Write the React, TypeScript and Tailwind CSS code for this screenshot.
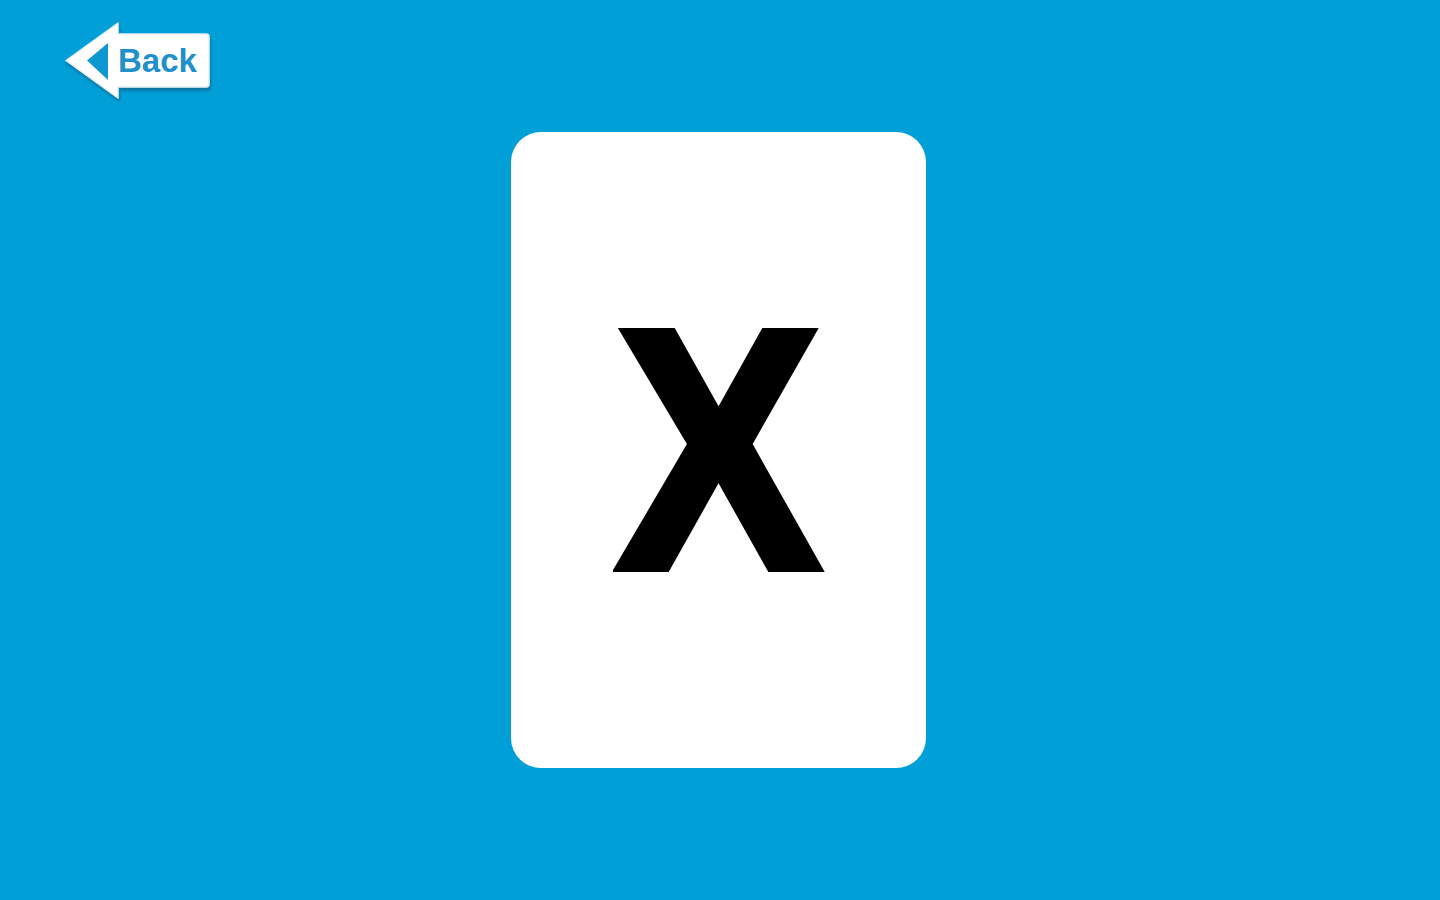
import React from 'react';

const BackButton: React.FC = () => (
    <button className="absolute left-[55px] top-[15px] w-[165px] h-[95px] cursor-pointer">
        <svg width="165" height="95" viewBox="0 0 165 95" className="absolute inset-0">
            <defs>
                <filter id="bshadow" x="-20%" y="-20%" width="140%" height="150%">
                    <feDropShadow dx="1" dy="3" stdDeviation="1.6" floodColor="#0b4f74" floodOpacity="0.55" />
                </filter>
            </defs>
            <path
                d="M11 45.5 L63 8 L63 19 L151 19 Q154 19 154 22 L154 69 Q154 72 151 72 L63 72 L63 83 Z"
                fill="#ffffff"
                stroke="#e3eef4"
                strokeWidth="1.5"
                strokeLinejoin="round"
                filter="url(#bshadow)"
            />
            <path d="M32 45.5 L53 28 L53 65 Z" fill="#0d98d2" />
        </svg>
        <span className="absolute left-[63px] top-[29px] text-[33px] leading-none font-bold text-[#2290c8] font-['Liberation_Sans',Arial,sans-serif]">
            Back
        </span>
    </button>
);

export default function App() {
    return (
        <div className="relative w-full h-screen bg-[#019fd7] overflow-hidden flex items-center justify-center font-['Liberation_Sans',Arial,sans-serif]">
            <BackButton />
            <div className="w-[415px] h-[636px] mr-[3px] bg-white rounded-[30px] flex items-center justify-center">
                <span className="text-[340px] leading-none font-bold text-black mt-[-2px] scale-x-[0.89] [-webkit-text-stroke:10px_black]">
                    X
                </span>
            </div>
        </div>
    );
}
